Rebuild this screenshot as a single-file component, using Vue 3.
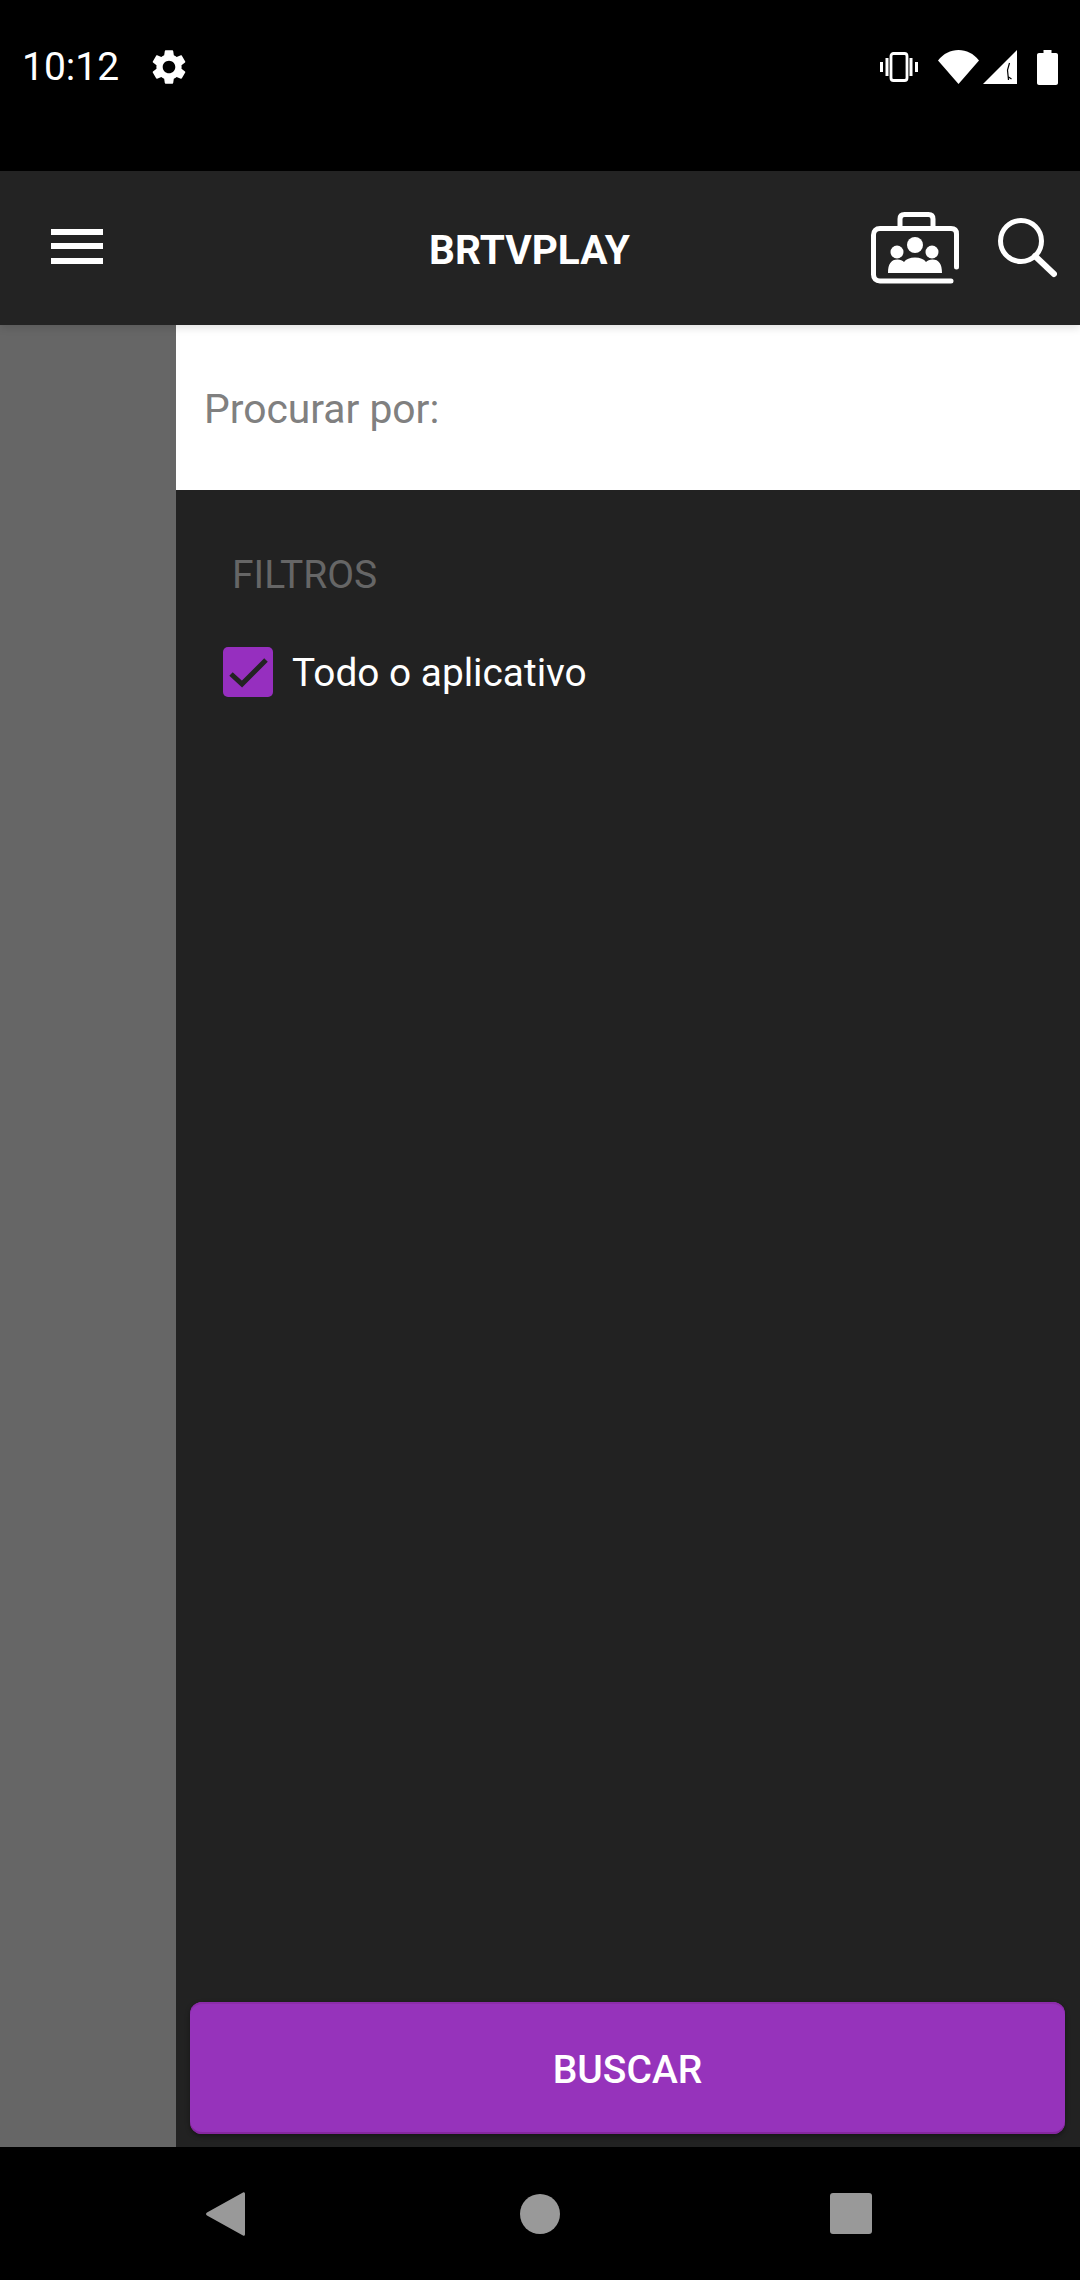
<script setup>
const title = 'BRTVPLAY'
const filters = ['Todo o aplicativo']
</script>

<template>
  <div class="screen">
    <div class="status-bar">
      <span class="time">10:12</span>
      <svg class="gear" viewBox="0 0 24 24" width="42" height="42">
        <path fill="#fff" d="M19.14 12.94c.04-.3.06-.61.06-.94 0-.32-.02-.64-.07-.94l2.03-1.58c.18-.14.23-.41.12-.61l-1.92-3.32c-.12-.22-.37-.29-.59-.22l-2.39.96c-.5-.38-1.03-.7-1.62-.94l-.36-2.54c-.04-.24-.24-.41-.48-.41h-3.84c-.24 0-.43.17-.47.41l-.36 2.54c-.59.24-1.13.57-1.62.94l-2.39-.96c-.22-.08-.47 0-.59.22L2.74 8.87c-.12.21-.08.47.12.61l2.03 1.58c-.05.3-.09.63-.09.94s.02.64.07.94l-2.03 1.58c-.18.14-.23.41-.12.61l1.92 3.32c.12.22.37.29.59.22l2.39-.96c.5.38 1.03.7 1.62.94l.36 2.54c.05.24.24.41.48.41h3.84c.24 0 .44-.17.47-.41l.36-2.54c.59-.24 1.13-.56 1.62-.94l2.39.96c.22.08.47 0 .59-.22l1.92-3.32c.12-.22.07-.47-.12-.61l-2.01-1.58zM12 15.6c-1.98 0-3.6-1.62-3.6-3.6s1.62-3.6 3.6-3.6 3.6 1.62 3.6 3.6-1.62 3.6-3.6 3.6z" />
      </svg>
      <div class="status-icons">
        <svg viewBox="0 0 38 30" width="38" height="30">
          <rect x="11" y="1.5" width="16" height="27" rx="2.5" fill="none" stroke="#fff" stroke-width="2.8" />
          <rect x="5.5" y="6" width="3" height="18" fill="#fff" />
          <rect x="29.5" y="6" width="3" height="18" fill="#fff" />
          <rect x="0" y="10" width="3" height="10" fill="#fff" />
          <rect x="35" y="10" width="3" height="10" fill="#fff" />
        </svg>
        <svg class="wifi" viewBox="0 0 41 34" width="41" height="34">
          <path fill="#fff" d="M0 10.500C5.500 3.500 12.500 0 20.500 0S35.500 3.500 41 10.500L20.500 34z" />
        </svg>
        <svg class="signal" viewBox="0 0 34 34" width="34" height="34">
          <path fill="#fff" d="M34 0V34H0z" />
          <path fill="none" stroke="#000" stroke-width="1.200" d="M26.500 13L24.500 20L25.500 30M25.500 27L28.500 29" />
        </svg>
        <svg class="battery" viewBox="0 0 21 35" width="21" height="35">
          <path fill="#fff" d="M6.500 0h8v3h4.500c1.100 0 2 .9 2 2v28c0 1.100-.9 2-2 2H2c-1.100 0-2-.9-2-2V5c0-1.100.9-2 2-2h4.500z" />
        </svg>
      </div>
    </div>

    <div class="toolbar">
      <div class="menu-icon"><span></span><span></span><span></span></div>
      <div class="title">{{ title }}</div>
      <div class="toolbar-actions">
        <svg viewBox="0 0 89 72" width="89" height="72">
          <path fill="none" stroke="#fff" stroke-width="5" stroke-linecap="round" d="M85.500 55V22c0-3.500-2-5.500-5.500-5.500H9c-4 0-6.500 2.500-6.500 6.500v39.500c0 4 2.500 6.500 6.500 6.500h71" />
          <path fill="none" stroke="#fff" stroke-width="5" d="M29 16.500V7c0-3 1.500-4.500 4.500-4.500h24c3 0 4.500 1.500 4.500 4.500v9.500" />
          <circle cx="44" cy="33" r="8" fill="#fff" />
          <circle cx="26" cy="40" r="6.500" fill="#fff" />
          <circle cx="61" cy="40" r="6.500" fill="#fff" />
          <path fill="#fff" d="M17 61c0-9 3-13.500 9.500-13.500 3 0 5 1 6.500 2.500 2-3 6-4.500 11-4.500s9 1.500 11 4.500c1.500-1.500 3.500-2.500 6.500-2.500 6.500 0 9.500 4.500 9.500 13.500z" />
        </svg>
        <svg viewBox="0 0 60 60" width="60" height="60">
          <circle cx="24" cy="23" r="20.500" fill="none" stroke="#fff" stroke-width="5" />
          <path d="M38 38L57 56" fill="none" stroke="#fff" stroke-width="6" stroke-linecap="round" />
        </svg>
      </div>
    </div>

    <div class="content">
      <div class="scrim"></div>
      <div class="panel">
        <div class="search-box">Procurar por:</div>
        <div class="filters">
          <div class="filters-label">FILTROS</div>
          <label v-for="f in filters" :key="f" class="filter-row">
            <span class="checkbox">
              <svg viewBox="0 0 50 50" width="50" height="50">
                <path d="M8 27L19 37L43 13" fill="none" stroke="#232323" stroke-width="5" />
              </svg>
            </span>
            <span>{{ f }}</span>
          </label>
        </div>
        <button class="search-button">BUSCAR</button>
      </div>
    </div>

    <div class="nav-bar">
      <svg viewBox="0 0 39 44" width="39" height="44">
        <path fill="#999" d="M37 0.500c1.200-.8 2 0 2 1.500v40c0 1.500-.8 2.300-2 1.500L1 23.500c-1.300-.9-1.300-2.100 0-3z" />
      </svg>
      <svg class="nav-home" viewBox="0 0 40 40" width="40" height="40">
        <circle cx="20" cy="20" r="20" fill="#999" />
      </svg>
      <svg class="nav-recent" viewBox="0 0 42 41" width="42" height="41">
        <rect width="42" height="41" rx="3" fill="#999" />
      </svg>
    </div>
  </div>
</template>

<style scoped>
.screen {
  width: 1080px;
  height: 2280px;
  display: flex;
  flex-direction: column;
  background-color: #000;
  font-family: Roboto, "Liberation Sans", sans-serif;
  overflow: hidden;
}

.status-bar {
  height: 134px;
  margin-bottom: 37px;
  padding: 0 22px 0 22px;
  display: flex;
  align-items: center;
  color: #fff;
}

.time {
  font-size: 39px;
}

.gear {
  margin-left: 29px;
}

.status-icons {
  margin-left: auto;
  display: flex;
  align-items: center;
}

.wifi {
  margin-left: 20px;
}

.signal {
  margin-left: 4px;
}

.battery {
  margin-left: 20px;
}

.toolbar {
  height: 154px;
  padding: 0 23px 0 51px;
  display: flex;
  align-items: center;
  background-color: #232323;
  position: relative;
  z-index: 1;
  box-shadow: 0 3px 8px rgba(0, 0, 0, 0.12);
}

.menu-icon {
  width: 52px;
  height: 35px;
  margin-bottom: 4px;
  display: flex;
  flex-direction: column;
  justify-content: space-between;
}

.menu-icon span {
  height: 6px;
  background-color: #fff;
}

.title {
  margin-left: 326px;
  margin-top: 4px;
  font-size: 40.6px;
  font-weight: 700;
  color: #fff;
}

.toolbar-actions {
  margin-left: auto;
  display: flex;
  align-items: center;
  gap: 37px;
}

.content {
  flex: 1;
  display: flex;
}

.scrim {
  width: 176px;
  background-color: #666;
}

.panel {
  flex: 1;
  display: flex;
  flex-direction: column;
  background-color: #222;
}

.search-box {
  box-sizing: border-box;
  height: 165px;
  padding: 2px 0 0 28px;
  display: flex;
  align-items: center;
  background-color: #fff;
  color: #808080;
  font-size: 40.8px;
}

.filters {
  flex: 1;
  padding: 63px 0 0 47px;
}

.filters-label {
  padding-left: 9px;
  font-size: 39px;
  line-height: 44px;
  color: #666;
}

.filter-row {
  margin-top: 50px;
  display: flex;
  align-items: center;
  gap: 19px;
  color: #fff;
  font-size: 38.8px;
}

.checkbox {
  width: 50px;
  height: 50px;
  border-radius: 5px;
  background-color: #962fbf;
}

.checkbox svg {
  display: block;
}

.search-button {
  height: 132px;
  margin: 0 15px 13px 14px;
  padding: 4px 0 0;
  border: none;
  border-radius: 12px;
  background-color: #9633bb;
  color: #fff;
  font-family: inherit;
  font-size: 39px;
  font-weight: 500;
  box-shadow: 0 2px 5px rgba(0, 0, 0, 0.4), inset 0 -2px 0 #86289f, inset 0 2px 0 #8c2cab;
}

.nav-bar {
  height: 133px;
  padding-left: 206px;
  display: flex;
  align-items: center;
  background-color: #000;
}

.nav-home {
  margin-left: 275px;
}

.nav-recent {
  margin-left: 270px;
}
</style>
